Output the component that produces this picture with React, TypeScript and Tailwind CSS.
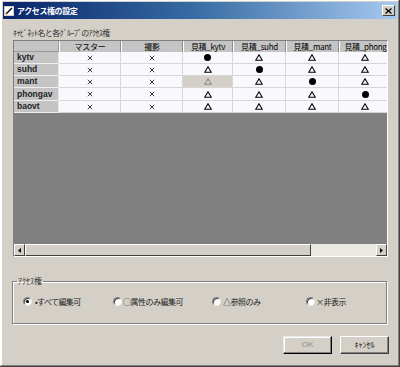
import React from "react";

const jp = "font-['Noto_Sans_CJK_JP',sans-serif]";
const lat = "font-['Liberation_Sans','Noto_Sans_CJK_JP',sans-serif]";

const cols = [
  { w: "w-[62px]", label: "マスター" },
  { w: "w-[62px]", label: "撮影" },
  { w: "w-[50px]", label: "見積_kytv" },
  { w: "w-[53px]", label: "見積_suhd" },
  { w: "w-[53px]", label: "見積_mant" },
  { w: "w-[53px]", label: "見積_phong" },
];

const rows: { name: string; h: string; cells: string[] }[] = [
  { name: "kytv", h: "h-[12px]", cells: ["×", "×", "●", "△", "△", "△"] },
  { name: "suhd", h: "h-[12px]", cells: ["×", "×", "△", "●", "△", "△"] },
  { name: "mant", h: "h-[12px]", cells: ["×", "×", "△", "△", "●", "△"] },
  { name: "phongav", h: "h-[13px]", cells: ["×", "×", "△", "△", "△", "●"] },
  { name: "baovt", h: "h-[12px]", cells: ["×", "×", "△", "△", "△", "△"] },
];

function Sym({ s, dim }: { s: string; dim?: boolean }) {
  if (s === "●")
    return <span className="block w-[7px] h-[7px] rounded-full bg-black" />;
  if (s === "△")
    return (
      <svg width="8" height="7" viewBox="0 0 8 7">
        <path d="M4 0.8 L7.3 6.3 L0.7 6.3 Z" fill="none" stroke={dim ? "#8a8a8a" : "#000"} strokeWidth="1.1" />
      </svg>
    );
  return (
    <svg width="6" height="6" viewBox="0 0 6 6">
      <path d="M0.8 0.8 L5.2 5.2 M5.2 0.8 L0.8 5.2" stroke="#222" strokeWidth="0.9" />
    </svg>
  );
}

function Radio({ on }: { on?: boolean }) {
  return (
    <span className="relative flex items-center justify-center w-[9px] h-[9px] rounded-full bg-white border border-t-[#808080] border-l-[#808080] border-b-[#e8e8e8] border-r-[#e8e8e8] shadow-[inset_1px_1px_0_#404040]">
      {on && <span className="w-[3px] h-[3px] rounded-full bg-black" />}
    </span>
  );
}

export default function App() {
  return (
    <div className="w-[400px] h-[367px] bg-[#d4d0c8] border-r border-b border-[#404040] overflow-hidden">
      <div className="w-full h-full border-l-2 border-t border-white border-r border-b border-r-[#808080] border-b-[#808080] p-[1px] flex flex-col">
        {/* Title bar */}
        <div className="h-[17px] flex items-center bg-linear-to-r from-[#0a246a] via-[#3a6ea5] to-[#a6caf0]">
          <svg width="10" height="10" viewBox="0 0 10 10" className="ml-[1px]">
            <rect x="0" y="0" width="10" height="10" fill="#d4d0c8" />
            <rect x="1" y="1" width="8" height="8" fill="#fff" />
            <path d="M2 8 L8 2" stroke="#1a1a1a" strokeWidth="1.6" />
            <path d="M2 8 L3 7" stroke="#c04000" strokeWidth="1.6" />
          </svg>
          <span className={`${jp} ml-[3px] text-[8px] font-bold text-white tracking-[-0.4px] leading-none`}>
            アクセス権の設定
          </span>
          <div className="ml-auto mr-[2px] w-[13px] h-[11px] bg-[#d4d0c8] border border-t-white border-l-white border-r-[#404040] border-b-[#404040] flex items-center justify-center">
            <svg width="7" height="6" viewBox="0 0 7 6">
              <path d="M0.5 0.5 L6.5 5.5 M6.5 0.5 L0.5 5.5" stroke="#000" strokeWidth="1.3" />
            </svg>
          </div>
        </div>

        {/* Body */}
        <div className="flex flex-col pl-[10px]">
          <div className={`${jp} mt-[9px] text-[8px] leading-[10px] text-[#333] tracking-[-0.6px]`}>
            ｷｬﾋﾞﾈｯﾄ名と各ｸﾞﾙｰﾌﾟのｱｸｾｽ権
          </div>

          {/* Grid */}
          <div className="mt-[2px] w-[375px] h-[217px] border border-t-[#808080] border-l-[#808080] border-r-white border-b-white flex flex-col">
            <div className="flex-1 bg-[#808080] overflow-hidden flex flex-col">
              {/* header */}
              <div className="flex h-[11px] shrink-0">
                <div className="w-[45px] shrink-0 bg-[#c4c4c4] border-r border-b border-r-[#9a9a9a] border-b-[#9a9a9a]" />
                {cols.map((c) => (
                  <div
                    key={c.label}
                    className={`${c.w} shrink-0 bg-[#c4c4c4] border-l border-l-white border-r border-r-[#8c8c8c] flex items-center justify-center overflow-hidden`}
                  >
                    <span className={`${jp} text-[8px] leading-none text-black whitespace-nowrap tracking-[-0.3px]`}>
                      {c.label}
                    </span>
                  </div>
                ))}
              </div>
              {rows.map((r, ri) => (
                <div key={r.name} className={`flex ${r.h} shrink-0`}>
                  <div className="w-[45px] shrink-0 bg-[#c4c4c4] border-b border-b-[#eeeeee] border-r border-r-[#e6e6e6] flex items-center pl-[3px]">
                    <span className={`${lat} text-[8.5px] font-bold leading-none text-[#222]`}>{r.name}</span>
                  </div>
                  {cols.map((c, ci) => {
                    const sel = ri === 2 && ci === 2;
                    return (
                      <div
                        key={ci}
                        className={`${c.w} shrink-0 ${sel ? "bg-[#d4d0c8]" : "bg-[#f8f8fd]"} border-r border-b border-[#d6d6d6] flex items-center justify-center`}
                      >
                        <Sym s={r.cells[ci]} dim={sel} />
                      </div>
                    );
                  })}
                </div>
              ))}
            </div>
            {/* scrollbar */}
            <div className="h-[12px] flex shrink-0 bg-[#eae8e3]">
              <div className="w-[11px] h-full bg-[#d4d0c8] border border-t-white border-l-white border-r-[#404040] border-b-[#404040] flex items-center justify-center">
                <svg width="3" height="5" viewBox="0 0 3 5">
                  <path d="M3 0 L0 2.5 L3 5 Z" fill="#000" />
                </svg>
              </div>
              <div className="w-[286px] h-full bg-[#d4d0c8] border border-t-white border-l-white border-r-[#404040] border-b-[#404040]" />
              <div className="flex-1" />
              <div className="w-[11px] h-full bg-[#d4d0c8] border border-t-white border-l-white border-r-[#404040] border-b-[#404040] flex items-center justify-center">
                <svg width="3" height="5" viewBox="0 0 3 5">
                  <path d="M0 0 L3 2.5 L0 5 Z" fill="#000" />
                </svg>
              </div>
            </div>
          </div>

          {/* Group box */}
          <fieldset className="mt-[19px] -ml-[1px] w-[375px] h-[48px] border border-[#808080] shadow-[inset_1px_1px_0_#fff,1px_1px_0_#fff] px-[4px] m-0">
            <legend className={`${jp} px-[1px] text-[8px] leading-[10px] text-[#333]`}>ｱｸｾｽ権</legend>
            <div className="flex items-center mt-[11px] pl-[6px]">
              <div className="w-[90px] flex items-center gap-[3px]">
                <Radio on />
                <span className={`${jp} text-[8px] leading-none text-[#222] tracking-[-0.6px]`}>•すべて編集可</span>
              </div>
              <div className="w-[99px] flex items-center gap-[1px]">
                <Radio />
                <span className={`${jp} text-[8px] leading-none text-[#222] tracking-[-0.5px]`}>○属性のみ編集可</span>
              </div>
              <div className="w-[94px] flex items-center gap-[2px]">
                <Radio />
                <span className={`${jp} text-[8px] leading-none text-[#222] tracking-[-0.5px]`}>△参照のみ</span>
              </div>
              <div className="flex items-center gap-[1px]">
                <Radio />
                <span className={`${jp} text-[8px] leading-none text-[#222] tracking-[-0.5px]`}>×非表示</span>
              </div>
            </div>
          </fieldset>

          {/* Buttons */}
          <div className="mt-[12px] ml-[270px] flex gap-[8px]">
            <div className="w-[49px] h-[18px] bg-[#d4d0c8] border border-t-[#e8e8e8] border-l-[#e8e8e8] border-r-black border-b-black shadow-[inset_-1px_-1px_0_#808080,inset_1px_1px_0_#fff] flex items-center justify-center">
              <span className={`${lat} text-[8px] leading-none text-[#8a8a8a]`}>OK</span>
            </div>
            <div className="w-[49px] h-[18px] bg-[#d4d0c8] border border-t-white border-l-white border-r-[#404040] border-b-[#404040] shadow-[inset_-1px_-1px_0_#808080] flex items-center justify-center">
              <span className={`${jp} text-[8px] leading-none text-[#222]`}>ｷｬﾝｾﾙ</span>
            </div>
          </div>
        </div>
      </div>
    </div>
  );
}
